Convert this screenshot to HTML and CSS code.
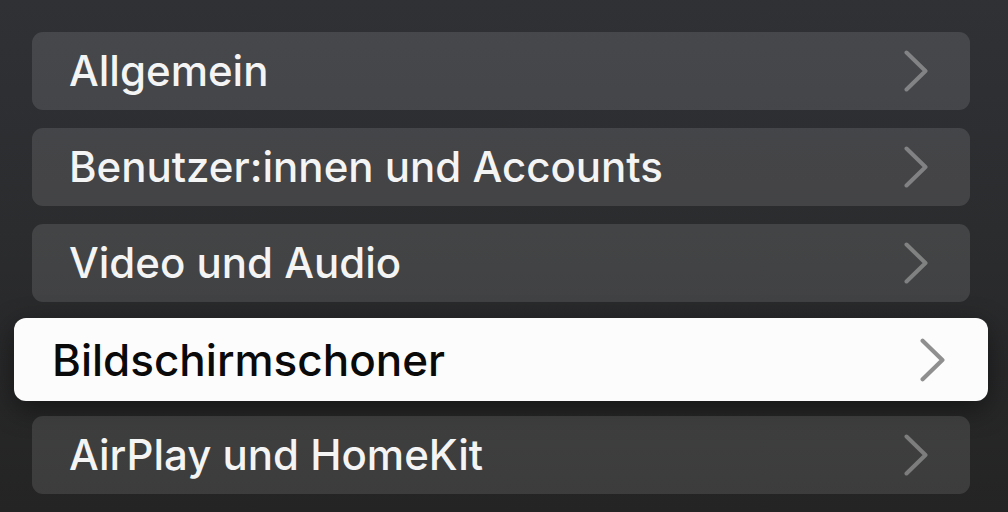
FILE: index.html
```html
<!DOCTYPE html>
<html lang="de">
<head>
<meta charset="utf-8">
<title>Einstellungen</title>
<link rel="stylesheet" href="styles.css">
</head>
<body>
<main class="screen">
  <ul class="menu">
    <li class="row"><span class="label">Allgemein</span><svg class="chev" viewBox="0 0 24 42"><polyline points="2.5,2.5 21.5,21 2.5,39.5"/></svg></li>
    <li class="row"><span class="label">Benutzer:innen und Accounts</span><svg class="chev" viewBox="0 0 24 42"><polyline points="2.5,2.5 21.5,21 2.5,39.5"/></svg></li>
    <li class="row"><span class="label">Video und Audio</span><svg class="chev" viewBox="0 0 24 42"><polyline points="2.5,2.5 21.5,21 2.5,39.5"/></svg></li>
    <li class="row focused"><span class="label">Bildschirmschoner</span><svg class="chev" viewBox="0 0 24 42"><polyline points="2.5,2.5 21.5,21 2.5,39.5"/></svg></li>
    <li class="row"><span class="label">AirPlay und HomeKit</span><svg class="chev" viewBox="0 0 24 42"><polyline points="2.5,2.5 21.5,21 2.5,39.5"/></svg></li>
  </ul>
</main>
</body>
</html>
```
FILE: styles.css
```css
html, body {
  margin: 0;
  padding: 0;
  height: 100%;
}
body {
  background: linear-gradient(180deg, #303135 0%, #2b2c2e 45%, #242424 100%);
  font-family: "Inter", "Liberation Sans", sans-serif;
  overflow: hidden;
}
.screen {
  padding: 32px 38px 0 32px;
}
.menu {
  list-style: none;
  margin: 0;
  padding: 0;
  display: flex;
  flex-direction: column;
  gap: 18px;
}
.row {
  height: 78px;
  box-sizing: border-box;
  border-radius: 11px;
  background: rgba(255, 255, 255, 0.115);
  display: flex;
  align-items: center;
  justify-content: space-between;
  padding: 0 42px 0 37px;
  color: #f4f4f4;
}
.label {
  font-size: 42px;
  font-weight: 500;
  line-height: 1;
}
.chev {
  width: 24px;
  height: 42px;
  fill: none;
  stroke: rgba(255, 255, 255, 0.33);
  stroke-width: 4;
  stroke-linecap: round;
  stroke-linejoin: round;
}
.focused {
  height: 83px;
  margin: -2px -18px -3px -18px;
  background: #fcfcfc;
  color: #0a0a0a;
  padding: 0 43px 0 38px;
  border-radius: 12px;
  box-shadow: 0 8px 28px rgba(0, 0, 0, 0.45);
}
.focused .label {
  font-size: 44px;
}
.focused .chev {
  stroke: #8f8f8f;
  width: 25px;
  height: 44px;
}
```
